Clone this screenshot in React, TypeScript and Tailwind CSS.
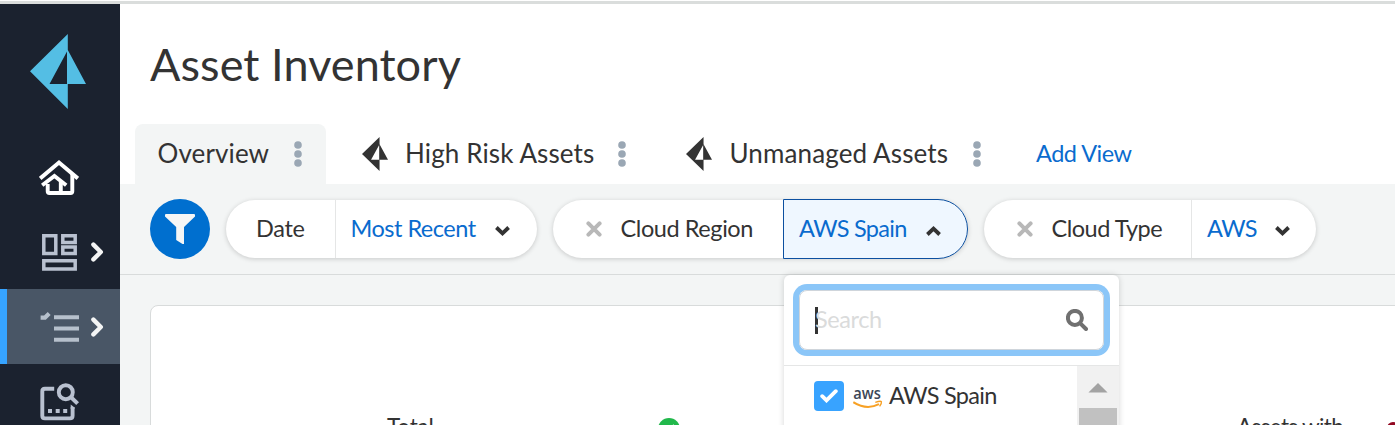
import React from 'react';

const Prism = ({ className }: { className: string }) => (
  <svg className={className} viewBox="0 0 56 75" preserveAspectRatio="none" fill="currentColor">
    <path fillRule="evenodd" d="M37.8 0V16L56 50H37.8V75L0 37.3ZM37 17.5L19.5 50H37Z" />
  </svg>
);

const Dots = () => (
  <svg className="h-[26px] w-2 shrink-0" viewBox="0 0 8 26" fill="#9aa7b4">
    <circle cx="4" cy="4" r="3.8" />
    <circle cx="4" cy="13" r="3.8" />
    <circle cx="4" cy="22" r="3.8" />
  </svg>
);

const Chevron = ({ up = false }: { up?: boolean }) => (
  <svg className="h-[10px] w-[15px] shrink-0" viewBox="0 0 15 10" fill="none" stroke="#333" strokeWidth="3.8">
    <path d={up ? 'M1.4 8.5L7.5 2.7L13.6 8.5' : 'M1.4 1.5L7.5 7.3L13.6 1.5'} />
  </svg>
);

const Close = () => (
  <svg className="h-4 w-4 shrink-0" viewBox="0 0 16 16" fill="none" stroke="#b8b8b8" strokeWidth="4" strokeLinecap="round">
    <path d="M2.4 2.4L13.6 13.6M13.6 2.4L2.4 13.6" />
  </svg>
);

const NavArrow = ({ className }: { className: string }) => (
  <svg className={`h-5 w-[13px] ${className}`} viewBox="0 0 13 20" fill="none" stroke="#f4f5f5" strokeWidth="4.4" strokeLinecap="round" strokeLinejoin="round">
    <path d="M2.4 2.6L9.8 10L2.4 17.4" />
  </svg>
);

const HomeIcon = () => (
  <svg className="mt-[2px] h-9 w-10" viewBox="0 0 40 36" fill="none" stroke="#fff" strokeWidth="3.9">
    <path d="M1.2 18.4L20 2.6L38.8 18.4" />
    <path d="M33.3 14V31.3Q33.3 33 31.6 33H10.4Q8.7 33 8.7 31.3V24" />
    <path d="M3.2 25.3L15.4 16L27.2 25.3" />
    <path d="M21.8 22V33" />
  </svg>
);

const DashboardIcon = () => (
  <svg className="h-[37px] w-[35px]" viewBox="0 0 35 37" fill="none" stroke="#b9c1d0" strokeWidth="3.5">
    <path d="M1.8 1.8H13.8V19.4H1.8ZM20.8 1.8H33.2V8.4H20.8ZM20.8 13H33.2V19.4H20.8ZM1.8 26.8H33.2V35H1.8Z" />
  </svg>
);

const ListIcon = () => (
  <svg className="h-8 w-[39px]" viewBox="0 0 39 32" fill="none" stroke="#b6c0cc" strokeWidth="4">
    <path d="M14 6.3H39M14 17.6H39M14 28.8H39" />
    <path d="M.6 6.6H5L9.2 2.6" strokeWidth="4.2" />
  </svg>
);

const ScanIcon = () => (
  <svg className="h-[38px] w-[39px]" viewBox="0 0 39 38" fill="none" stroke="#b9c1d0" strokeWidth="3.9">
    <path d="M14.2 5.7H4.9Q2.3 5.7 2.3 8.3V32.8Q2.3 35.4 4.9 35.4H30Q32.6 35.4 32.6 32.8V24" />
    <path d="M30.7 21.5L34.5 24.5V26H30.7Z" fill="#b9c1d0" stroke="none" />
    <circle cx="25.8" cy="9.2" r="7" />
    <path d="M30.8 14L37.6 20.6" strokeWidth="4" />
    <path d="M8 28H12M15.7 28H19.7M23.2 28H27.2" strokeWidth="4" />
  </svg>
);

const AwsLogo = () => (
  <svg className="ml-[9px] h-6 w-[30px] shrink-0" viewBox="0 0 30 24">
    <text x="0.2" y="15" fill="#3c4656" fontFamily="Open Sans, sans-serif" fontWeight="600" fontSize="17" textLength="27.6" lengthAdjust="spacingAndGlyphs">aws</text>
    <path d="M.3 18.2Q13.5 26.5 26 20.2" fill="none" stroke="#f7a125" strokeWidth="2" />
    <path d="M22.3 18.4Q27.5 16.6 28.4 17.6Q28.8 19.5 26.6 22.4" fill="none" stroke="#f7a125" strokeWidth="1.4" />
  </svg>
);

const pill = 'flex h-[58px] items-center rounded-full bg-white shadow-[0_1px_5px_rgba(0,0,0,0.18)]';

export default function App() {
  return (
    <div className="flex h-[425px] w-[1395px] flex-col overflow-hidden bg-white text-[23.5px] leading-none text-[#333] [font-family:Lato,sans-serif]">
      <div className="mt-px h-[3px] shrink-0 bg-[#dadddc]" />
      <div className="flex h-[421px]">
        <nav className="flex w-[120px] shrink-0 flex-col bg-[#1b222f]">
          <div className="h-[135px] shrink-0 pt-[30px] pl-[30px]">
            <Prism className="h-[75px] w-14 text-[#54bee4]" />
          </div>
          <a className="flex h-[75px] shrink-0 items-center pl-[39px]"><HomeIcon /></a>
          <a className="flex h-[75px] shrink-0 items-center pt-px pl-[42px]"><DashboardIcon /><NavArrow className="ml-[13.5px]" /></a>
          <a className="flex h-[75px] shrink-0 items-center border-l-[7px] border-[#36a3ff] bg-[#495666] pl-[33px]"><ListIcon /><NavArrow className="ml-[11.5px]" /></a>
          <a className="flex h-[75px] shrink-0 items-start pt-[19px] pl-10"><ScanIcon /></a>
        </nav>

        <main className="flex w-[1275px] flex-col">
          <h1 className="h-[120px] shrink-0 pt-[38px] pl-[30px] text-[45px] tracking-[0.07px] whitespace-nowrap">Asset Inventory</h1>

          <div className="flex h-[60px] shrink-0 items-center pl-[15px] text-[26px] tracking-[0.12px] whitespace-nowrap">
            <div className="flex h-full w-[191px] items-center rounded-t-lg bg-[#f3f5f5] pl-[22.5px]">
              <span className="w-[136.5px] pb-[2px]">Overview</span><Dots />
            </div>
            <div className="flex w-[324px] items-center pl-[36px]">
              <Prism className="h-[34px] w-[26px]" />
              <span className="ml-[17px] w-[213px] pb-[2px]">High Risk Assets</span><Dots />
            </div>
            <div className="flex w-[386px] items-center pl-[36px]">
              <Prism className="h-[34px] w-[26px]" />
              <span className="ml-[17.5px] w-[243.5px] pb-[2px]">Unmanaged Assets</span><Dots />
            </div>
            <a className="text-[23.5px] tracking-[-0.5px] text-[#0a6bce]">Add View</a>
          </div>

          <div className="flex h-[91px] shrink-0 items-center border-b border-[#d8dbdb] bg-[#f3f5f5] pl-[30px] tracking-[-0.5px] whitespace-nowrap">
            <button className="flex h-[60px] w-[60px] items-center justify-center rounded-full bg-[#006fcf]">
              <svg className="h-[30px] w-[30px]" viewBox="0 0 30 30" fill="#f5f6f6">
                <path d="M1 0H29Q30 0 30 1V2.5L19 13V30H17.5L11.2 26V13L0 2.5V1Q0 0 1 0Z" />
              </svg>
            </button>
            <div className={`${pill} ml-4 w-[311px]`}>
              <div className="flex h-full w-[110px] items-center border-r border-[#e5e6e6] pl-[30px] tracking-[-0.3px]">Date</div>
              <div className="flex items-center pl-[14.5px] text-[#0a6bce]"><span className="w-[144px]">Most Recent</span><div className="pt-1"><Chevron /></div></div>
            </div>
            <div className={`${pill} ml-4 w-[415px]`}>
              <div className="flex h-full w-[230px] items-center pl-[33px] tracking-[-0.42px]"><Close /><span className="ml-[18.5px]">Cloud Region</span></div>
              <div className="flex h-[60px] w-[185px] items-center rounded-r-full border border-[#0c50a0] bg-[#eff7ff] pl-[15px] tracking-[-0.7px] text-[#0a6bce]"><span className="w-[126.5px]">AWS Spain</span><div className="pt-[3px]"><Chevron up /></div></div>
            </div>
            <div className={`${pill} ml-4 w-[332px]`}>
              <div className="flex h-full w-[208px] items-center border-r border-[#e5e6e6] pl-[33px]"><Close /><span className="ml-[18.5px]">Cloud Type</span></div>
              <div className="flex items-center pl-[15px] tracking-[-0.7px] text-[#0a6bce]"><span className="w-[68px]">AWS</span><div className="pt-1"><Chevron /></div></div>
            </div>
          </div>

          <div className="relative h-[150px] bg-[#f3f5f5] pt-[30px] pl-[30px]">
            <section className="flex h-[180px] w-[1300px] items-start rounded-tl-lg border border-[#d8dbdb] bg-white pt-[110px] pl-[236px] whitespace-nowrap">
              <span className="w-[271px] text-[22.5px] tracking-[-0.2px]">Total</span>
              <svg className="mt-[2px] h-[22px] w-[22px]" viewBox="0 0 22 22"><circle cx="11" cy="11" r="11" fill="#21b84b" /><path d="M6 11.5L9.5 15L16 7" fill="none" stroke="#fff" strokeWidth="2" /></svg>
              <span className="ml-[557px] w-[150px] text-[22.5px] tracking-[-0.65px]">Assets with</span>
              <span className="mt-[6px] h-3 w-3 rounded-full bg-[#920821]" />
            </section>

            <div className="absolute top-0 left-[664px] h-[170px] w-[335px] rounded-t-md bg-white shadow-[0_0_6px_rgba(0,0,0,0.16)]">
              <div className="h-[91px] border-b border-[#e5e6e6] pt-[15px] pl-[15px]">
                <label className="flex h-[60px] w-[305px] items-center rounded-lg border border-[#cfd5db] pl-[15px] text-[#dadbdb] shadow-[0_0_0_6px_#8bc6f8]">
                  <span className="h-[27px] w-[3px] shrink-0 bg-[#333]" />
                  <span className="-ml-[3px] w-[251px] shrink-0 tracking-[-0.4px]">Search</span>
                  <svg className="h-[22px] w-[22px] shrink-0" viewBox="0 0 22 22" fill="none" stroke="#707070" strokeWidth="4"><circle cx="8.9" cy="8.9" r="7" /><path d="M14.3 14.3L20 20" strokeLinecap="round" /></svg>
                </label>
              </div>
              <div className="flex h-20">
                <div className="flex h-[60px] w-[293px] items-center pl-[30px]">
                  <span className="flex h-[30px] w-[30px] items-center justify-center rounded bg-[#38a3ff]">
                    <svg className="h-[14px] w-[18px]" viewBox="0 0 18 14" fill="none" stroke="#fff" strokeWidth="3.8" strokeLinecap="round"><path d="M2.2 7.2L6.5 11.4L15.8 2.2" /></svg>
                  </span>
                  <AwsLogo />
                  <span className="ml-[6px] tracking-[-0.7px] whitespace-nowrap">AWS Spain</span>
                </div>
                <div className="flex w-[42px] flex-col items-center bg-[#f1f1f1] pt-[17px]">
                  <svg className="h-[10px] w-5" viewBox="0 0 20 10" fill="#a3a3a3"><path d="M10 0L20 10H0Z" /></svg>
                  <span className="mt-[15px] h-10 w-[38px] bg-[#c1c1c1]" />
                </div>
              </div>
            </div>
          </div>
        </main>
      </div>
    </div>
  );
}
